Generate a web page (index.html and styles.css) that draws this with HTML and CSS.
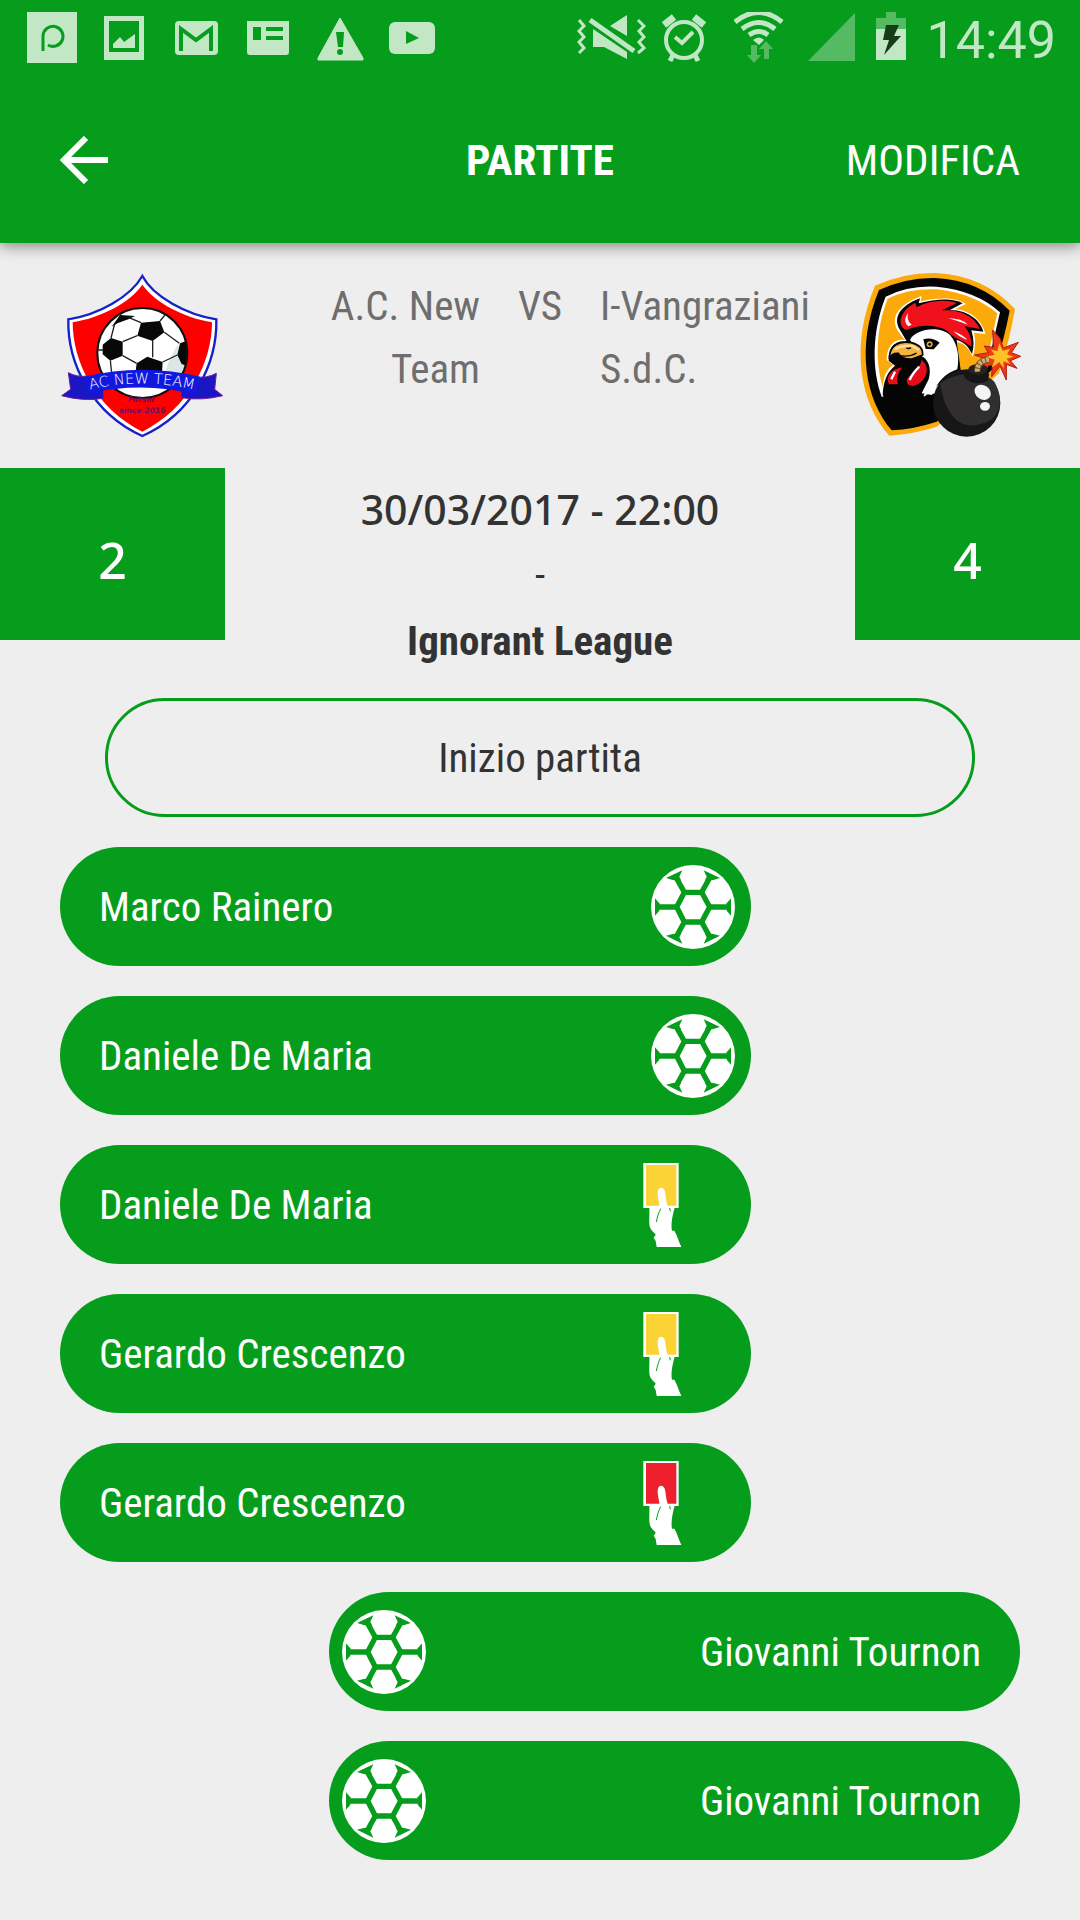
FILE: index.html
```html
<!DOCTYPE html>
<html lang="it">
<head>
    <meta charset="UTF-8">
    <meta name="viewport" content="width=device-width, initial-scale=1.0">
    <title>Partite</title>
    <link rel="stylesheet" href="styles.css">
</head>
<body>
    <!-- Shared icons -->
    <svg class="sprite" aria-hidden="true">
        <symbol id="ball" viewBox="93 75 252 252">
            <circle cx="219" cy="201" r="126" fill="#fff"/>
            <g fill="none" stroke="#079d1c" stroke-width="16">
                <path d="M170 201L193 157H245L269 201L245 246H193Z"/>
                <path d="M193 157L167 110M245 157L271 110M193 246L167 293M245 246L271 293M170 201H108M269 201H330"/>
            </g>
            <g fill="#079d1c">
                <path d="M138 114L187 91L178 110L184 122L158 120Z"/>
                <path d="M300 114L251 91L260 110L254 122L280 120Z"/>
                <path d="M138 287L187 311L178 292L184 280L158 282Z"/>
                <path d="M300 287L251 311L260 292L254 280L280 282Z"/>
                <path d="M105 175V227L118 212V190Z"/>
                <path d="M333 175V227L320 212V190Z"/>
            </g>
        </symbol>
        <symbol id="card" viewBox="69 69 276 252">
            <path d="M88 200C89 225 86 250 90 262C94 274 104 278 107 284L101 293L107 303L110 321H184C176 304 172 287 163 272H156C152 250 158 225 164 203Z" fill="#fff"/>
            <path d="M70 69H176V204H70Z" fill="#fff"/>
            <path d="M78 75H169V197H78Z" fill="currentColor"/>
            <path d="M119 206C119 190 113 178 113 160C113 138 133 138 136 160C138 180 141 194 146 206Z" fill="#fff"/>
            <path d="M122 206C116 218 112 230 109 246M149 204L151 214" fill="none" stroke="#079d1c" stroke-width="3"/>
        </symbol>
    </svg>

    <header class="header">
        <!-- Status bar -->
        <div class="status-bar">
            <div class="status-left">
                <svg width="50" height="52" viewBox="0 0 50 52">
                    <path d="M0 0H50V51H0Z" fill="#c1e7c5"/>
                    <path d="M16 39V24A10 10 0 1 1 21 33" fill="none" stroke="#079d1c" stroke-width="3"/>
                </svg>
                <svg width="40" height="52" viewBox="0 0 40 52">
                    <path d="M0 4H40V48H0Z" fill="#c1e7c5"/>
                    <path d="M5 9H35V40H5Z" fill="#079d1c"/>
                    <path d="M9 36V32L16 25L20 30L31 22V36Z" fill="#c1e7c5"/>
                </svg>
                <svg width="48" height="52" viewBox="0 0 48 52">
                    <rect x="4" y="9" width="43" height="34" rx="4" fill="#c1e7c5"/>
                    <path d="M10 39V17L25 28L40 17V39" fill="none" stroke="#079d1c" stroke-width="4"/>
                </svg>
                <svg width="44" height="52" viewBox="0 0 44 52">
                    <path d="M1 9H43V40Q43 43 40 43H4Q1 43 1 40Z" fill="#c1e7c5"/>
                    <path d="M7 15H15V28H7ZM20 15H37V19H20ZM20 24H37V28H20Z" fill="#079d1c"/>
                </svg>
                <svg width="47" height="52" viewBox="0 0 47 52">
                    <path d="M23 6L46 46V48H1V46Z" fill="#c1e7c5" stroke="#c1e7c5" stroke-linejoin="round"/>
                    <path d="M19 20H27L26 35H21Z" fill="#079d1c"/>
                    <circle cx="23" cy="40" r="3" fill="#079d1c"/>
                </svg>
                <svg width="47" height="52" viewBox="2 0 47 52" overflow="visible">
                    <rect x="0" y="10" width="46" height="32" rx="6" fill="#c1e7c5"/>
                    <path d="M17 19L30 26L17 32Z" fill="#079d1c"/>
                </svg>
            </div>
            <div class="status-right">
                <svg width="69" height="52" viewBox="0 0 69 52">
                    <path d="M2 8L7 14L2 19L7 25L2 30L7 36L2 41M61 8L67 14L62 19L67 25L62 30L67 36L61 41" fill="none" stroke="#c1e7c5" stroke-width="3"/>
                    <path d="M13 8L57 39" stroke="#c1e7c5" stroke-width="5"/>
                    <path d="M50 3V24L33 14ZM16 17L50 40V47L27 35H16Z" fill="#c1e7c5"/>
                </svg>
                <svg width="56" height="52" viewBox="0 0 56 52">
                    <g fill="none" stroke="#c1e7c5">
                        <circle cx="22" cy="28" r="18" stroke-width="4"/>
                        <path d="M13 25L20 31L31 20" stroke-width="4"/>
                        <path d="M11 43L8 49M33 43L36 49" stroke-width="5"/>
                        <path d="M2 13L12 5M42 13L32 5" stroke-width="7"/>
                    </g>
                </svg>
                <svg width="58" height="52" viewBox="0 0 58 52">
                    <g fill="none" stroke="#c1e7c5" stroke-width="5">
                        <path d="M1 10Q25 -9 48 10"/>
                        <path d="M8 17Q25 4 41 17"/>
                        <path d="M15 23Q25 16 34 23"/>
                    </g>
                    <path d="M19 28Q25 23 30 28L25 33Z" fill="#c1e7c5"/>
                    <path d="M17 33H23V43H27L20 51L13 43H17ZM30 47V37H25L32 29L39 37H35V47Z" fill="#55bb63"/>
                </svg>
                <svg width="52" height="52" viewBox="0 0 52 52">
                    <path d="M47 1V49H0Z" fill="#55bb63"/>
                </svg>
                <svg width="35" height="52" viewBox="0 0 35 52">
                    <path d="M10 0H20V6H30V17H0V6H10Z" fill="#55bb63"/>
                    <path d="M0 17H30V48H0Z" fill="#c1e7c5"/>
                    <path d="M10 13H23L18 24H25L8 43L13 28H7Z" fill="#143d18"/>
                </svg>
                <span class="clock">14:49</span>
            </div>
        </div>

        <!-- App bar -->
        <div class="app-bar">
            <button class="back-button" aria-label="Indietro">
                <svg width="48" height="48" viewBox="0 0 48 48">
                    <path d="M26 2L4 24L26 46M4 24H48" fill="none" stroke="#fff" stroke-width="6"/>
                </svg>
            </button>
            <h1>PARTITE</h1>
            <button class="edit-button">MODIFICA</button>
        </div>
    </header>

    <main>
        <!-- Teams -->
        <section class="teams">
            <svg class="team-logo" viewBox="60 45 486 486" role="img" aria-label="A.C. New Team">
                <path d="M307 48C340 110 440 165 529 178C532 310 460 460 307 528C155 460 82 310 85 178C175 165 272 110 307 48Z" fill="#fff" stroke="#1520c8" stroke-width="7"/>
                <path d="M307 74C345 128 430 172 516 187C516 305 448 445 307 515C166 445 98 305 98 187C184 172 270 128 307 74Z" fill="#f00"/>
                <clipPath id="crest-ball"><circle cx="307" cy="279" r="135"/></clipPath>
                <circle cx="307" cy="279" r="135" fill="#fff"/>
                <g clip-path="url(#crest-ball)">
                    <path d="M388 300L412 255L440 300L430 350H370Z" fill="#dbe6e6"/>
                    <path d="M303 188L360 183L373 217L338 243L292 227ZM188 254L213 234L248 245V287L211 302L188 283ZM290 310L322 290L368 306L366 340H286ZM420 250L445 240V320L425 312L412 285ZM215 200L240 165L285 168L265 178L232 190Z" fill="#080808"/>
                    <path d="M303 188L265 172M360 183L375 165M373 217L418 250M338 243V292M292 227L248 245M248 287L290 310M213 234L224 192M211 302L215 340M368 306L412 285M175 270H190" fill="none" stroke="#222" stroke-width="4"/>
                </g>
                <circle cx="307" cy="279" r="135" fill="none" stroke="#111" stroke-width="6"/>
                <path d="M85 338Q110 352 145 348L190 390V415Q130 425 65 407L92 388ZM529 340Q500 356 465 350L424 390V413Q485 423 548 407L524 388Z" fill="#1b16c4" stroke="#6d1c9c" stroke-width="3"/>
                <path d="M133 350Q307 308 480 350L466 403Q307 363 148 400Z" fill="#1119e0"/>
                <path id="ribbon" d="M150 389Q307 350 474 392" fill="none"/>
                <text class="crest-name"><textPath href="#ribbon">AC NEW TEAM</textPath></text>
                <text class="crest-note" x="303" y="426">Futsal</text>
                <text class="crest-note" x="307" y="460">since 2016</text>
            </svg>
            <p class="team-name home">A.C. New Team</p>
            <p class="versus">VS</p>
            <p class="team-name">I-Vangraziani S.d.C.</p>
            <svg class="team-logo" viewBox="54 45 486 486" role="img" aria-label="I-Vangraziani S.d.C.">
                <path d="M105 77Q190 38 285 39Q430 45 525 147Q508 245 477 340L290 500Q220 522 148 527C60 430 28 260 105 77Z" fill="#fca90c"/>
                <path d="M117 90Q200 52 285 54Q420 60 509 152Q492 240 465 320L290 485Q220 508 155 511C76 420 46 262 117 90Z" fill="#050505"/>
                <path d="M137 110Q205 75 290 80Q410 92 480 157L440 330L300 400L125 410C95 330 95 215 137 110Z" fill="#fff"/>
                <path d="M143 116Q205 85 290 88Q400 100 472 160L435 330L300 385L132 390C105 320 105 210 143 116Z" fill="#fca90c"/>
                <path d="M175 215C150 175 170 135 245 108L242 124C290 112 345 110 378 132L345 148C395 150 430 190 436 222L402 218Q410 255 398 290C385 265 375 250 352 246L360 330L250 412L130 405C125 360 135 330 160 315L140 300C140 260 160 235 195 240Z" fill="#fff"/>
                <path d="M180 210C158 175 178 138 240 115L236 130C290 116 340 114 368 130L330 150C390 150 424 188 430 215L394 211Q406 250 396 282C384 258 372 246 350 240L362 330L250 405L300 480Q225 500 170 486L128 405Q130 345 165 317L146 302C145 265 160 240 200 244Z" fill="#050505"/>
                <path d="M210 240C225 208 295 195 330 225C355 255 358 290 352 328Q300 345 276 405L245 400L266 358C276 325 264 296 244 288Z" fill="#fff"/>
                <path d="M199 210C172 200 174 155 226 128L230 142C270 120 315 118 350 129L306 151C355 147 402 165 420 207L374 199Q397 228 394 260C370 240 338 235 322 213C285 190 230 195 199 210Z" fill="#f0111d"/>
                <path d="M205 199C190 185 196 170 205 158Q197 180 215 194ZM325 175Q365 175 384 194Q350 182 325 175ZM341 214Q370 225 382 240Q355 230 341 214Z" fill="#fff"/>
                <path d="M148 296C148 257 175 242 213 248Q250 256 248 285L216 297Q185 298 175 280Q155 278 148 296Z" fill="#f4b53f" stroke="#050505" stroke-width="5"/>
                <path d="M165 268Q185 255 216 258L237 270" fill="none" stroke="#fbe0a0" stroke-width="7"/>
                <path d="M175 286Q207 293 230 279M199 263Q205 268 213 263" fill="none" stroke="#050505" stroke-width="4"/>
                <path d="M243 296C267 312 270 340 245 367C220 389 191 380 200 355C211 336 241 330 243 296ZM146 375C132 350 150 325 190 319Q165 352 177 374Z" fill="#e60c1a" stroke="#050505" stroke-width="4"/>
                <path d="M238 320Q217 340 209 360M165 335L154 358" stroke="#fff" stroke-width="7" fill="none"/>
                <path d="M250 238Q275 230 299 248L281 268L257 267Z" fill="#050505"/>
                <circle cx="269" cy="253" r="9" fill="#d8a650"/>
                <circle cx="269" cy="253" r="4" fill="#050505"/>
                <path d="M480 235L490 264L535 247L514 278L542 289L511 302L531 325L499 313L499 360L480 318L455 350L457 315L423 324L443 299L404 285L445 278L433 258L460 262L458 210Z" fill="#ee3b13" stroke="#af1713" stroke-width="3"/>
                <path d="M478 250L488 272L510 267L501 283L520 290L500 296L511 312L490 304L491 325L478 306L455 323L464 299L438 290L464 284L453 269L472 273Z" fill="#ffc226"/>
                <circle cx="380" cy="429" r="101" fill="#171717"/>
                <path d="M300 370C350 335 430 330 463 365C500 430 470 480 430 490C360 515 315 465 300 370Z" fill="#302e2e"/>
                <path d="M372 337Q400 315 448 341L443 363Q405 380 374 354Z" fill="#171515"/>
                <ellipse cx="414" cy="328" rx="29" ry="16" fill="#252222"/>
                <path d="M412 335Q411 303 447 298" fill="none" stroke="#6d4c28" stroke-width="19"/>
                <path d="M412 335Q411 303 447 298" fill="none" stroke="#d4ae77" stroke-width="14" stroke-dasharray="9 3"/>
                <ellipse cx="428" cy="397" rx="26" ry="21" fill="#f4f4f4" transform="rotate(35 428 397)"/>
                <ellipse cx="435" cy="439" rx="15" ry="13" fill="#f4f4f4"/>
            </svg>
        </section>

        <!-- Result -->
        <section class="result">
            <div class="score">2</div>
            <div class="match-info">
                <p class="match-date">30/03/2017 - 22:00</p>
                <p>-</p>
                <p class="league">Ignorant League</p>
            </div>
            <div class="score">4</div>
        </section>

        <!-- Events -->
        <ul class="events">
            <li class="event start">Inizio partita</li>
            <li class="event">
                <span>Marco Rainero</span>
                <svg class="icon-ball" role="img" aria-label="Gol"><use href="#ball"/></svg>
            </li>
            <li class="event">
                <span>Daniele De Maria</span>
                <svg class="icon-ball" role="img" aria-label="Gol"><use href="#ball"/></svg>
            </li>
            <li class="event">
                <span>Daniele De Maria</span>
                <svg class="icon-card yellow" role="img" aria-label="Ammonizione"><use href="#card"/></svg>
            </li>
            <li class="event">
                <span>Gerardo Crescenzo</span>
                <svg class="icon-card yellow" role="img" aria-label="Ammonizione"><use href="#card"/></svg>
            </li>
            <li class="event">
                <span>Gerardo Crescenzo</span>
                <svg class="icon-card red" role="img" aria-label="Espulsione"><use href="#card"/></svg>
            </li>
            <li class="event away">
                <span>Giovanni Tournon</span>
                <svg class="icon-ball" role="img" aria-label="Gol"><use href="#ball"/></svg>
            </li>
            <li class="event away">
                <span>Giovanni Tournon</span>
                <svg class="icon-ball" role="img" aria-label="Gol"><use href="#ball"/></svg>
            </li>
        </ul>
    </main>
</body>
</html>
```
FILE: styles.css
```css
:root {
    --green: #079d1c;
    --bg: #eeeeee;
    --text: #333333;
    --text-muted: #6e6e6e;
    --status: #c1e7c5;
}

* {
    box-sizing: border-box;
}

body {
    margin: 0;
    background: var(--bg);
    color: var(--text);
    font-family: 'Roboto Condensed', 'Liberation Sans Narrow', 'Open Sans Condensed', sans-serif;
    font-size: 41px;
}

p,
h1,
ul {
    margin: 0;
    padding: 0;
}

.sprite {
    position: absolute;
    width: 0;
    height: 0;
}

/* Header */
.header {
    background: var(--green);
    color: white;
    box-shadow: 0 3px 14px rgba(0, 0, 0, 0.45);
}

.status-bar {
    display: flex;
    justify-content: space-between;
    align-items: center;
    height: 76px;
    padding: 0 24px 0 27px;
}

.status-left,
.status-right {
    display: flex;
    align-items: center;
}

.status-left {
    gap: 27px;
}

.status-right {
    gap: 16px;
}

.clock {
    padding-top: 6px;
    font-family: Roboto, sans-serif;
    font-size: 52px;
    line-height: 60px;
    color: var(--status);
}

.app-bar {
    display: grid;
    grid-template-columns: 1fr auto 1fr;
    align-items: center;
    height: 167px;
    padding: 0 60px;
}

.app-bar h1 {
    font-size: 43px;
}

.app-bar button {
    padding: 0;
    border: none;
    background: none;
    color: white;
    font: inherit;
    font-size: 43px;
    cursor: pointer;
}

.app-bar .back-button {
    display: flex;
    justify-self: start;
}

.app-bar .edit-button {
    justify-self: end;
}

/* Teams */
.teams {
    display: grid;
    grid-template-columns: 162px 1fr 120px 1fr 162px;
    height: 225px;
    padding: 32px 60px 0;
    color: var(--text-muted);
    line-height: 63px;
}

.team-logo {
    width: 162px;
    height: 162px;
    overflow: visible;
}

.team-name.home {
    padding-left: 60px;
    text-align: right;
}

.versus {
    text-align: center;
}

.crest-name {
    font-family: 'DejaVu Sans', sans-serif;
    font-size: 44px;
    font-weight: 200;
    fill: white;
}

.crest-note {
    font-family: 'DejaVu Sans', sans-serif;
    font-size: 23px;
    font-style: italic;
    font-weight: bold;
    fill: #6b1060;
    text-anchor: middle;
}

/* Result */
.result {
    display: grid;
    grid-template-columns: 225px 1fr 225px;
    align-items: start;
}

.score {
    height: 172px;
    line-height: 184px;
    background: var(--green);
    color: white;
    font-family: 'Noto Sans', sans-serif;
    font-size: 50px;
    font-weight: 500;
    text-align: center;
}

.match-info {
    padding-top: 8px;
    line-height: 66px;
    text-align: center;
}

.match-date {
    font-family: 'Noto Sans', sans-serif;
    font-weight: 500;
}

.league {
    font-weight: bold;
}

/* Events */
.events {
    display: flex;
    flex-direction: column;
    gap: 30px;
    padding: 24px 60px 60px;
    list-style: none;
}

.event {
    display: flex;
    justify-content: space-between;
    align-items: center;
    width: 72%;
    height: 119px;
    padding: 0 16px 0 39px;
    border-radius: 60px;
    background: var(--green);
    color: white;
}

.event.start {
    align-self: center;
    justify-content: center;
    width: 870px;
    max-width: 100%;
    padding: 0;
    border: 3px solid var(--green);
    background: none;
    color: var(--text);
}

.event.away {
    flex-direction: row-reverse;
    align-self: flex-end;
    padding: 0 39px 0 13px;
}

.icon-ball {
    width: 84px;
    height: 84px;
}

.icon-card {
    width: 92px;
    height: 84px;
}

.yellow {
    color: #fbd334;
}

.red {
    color: #ef202e;
}
```
